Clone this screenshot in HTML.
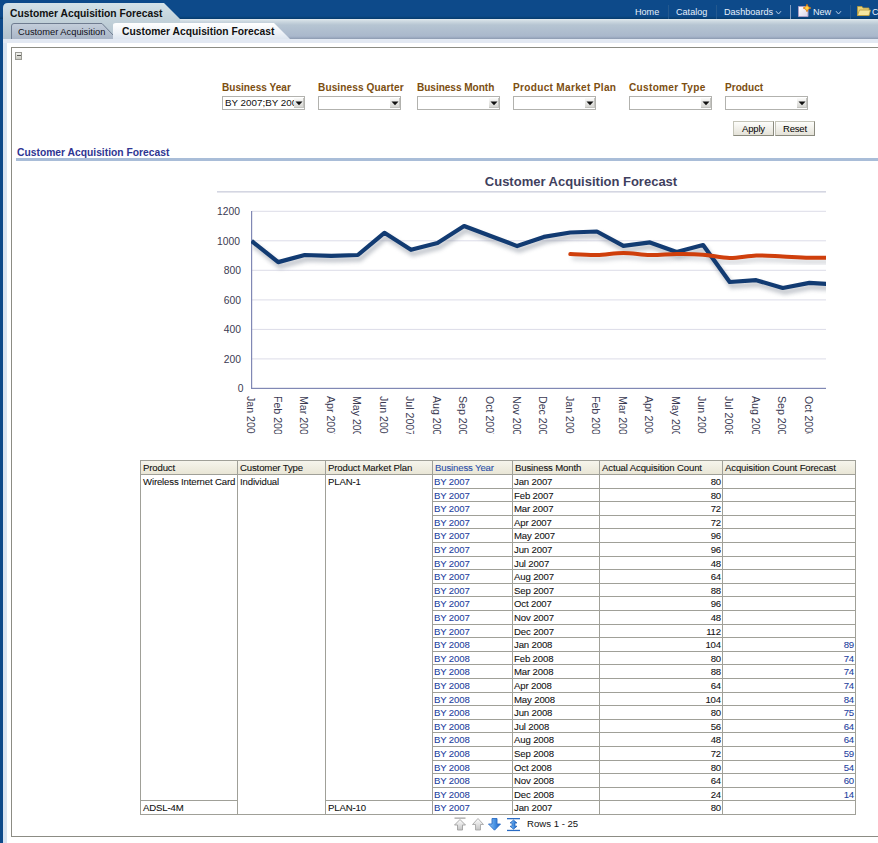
<!DOCTYPE html>
<html><head><meta charset="utf-8">
<style>
html,body{margin:0;padding:0;}
body{width:878px;height:843px;overflow:hidden;position:relative;background:#fff;font-family:"Liberation Sans",sans-serif;}
.a{position:absolute;}
.t{position:absolute;white-space:nowrap;}
</style></head><body>

<!-- left dark frame -->
<div class="a" style="left:0;top:0;width:3px;height:843px;background:#0d4a8a"></div>
<div class="a" style="left:3px;top:39px;width:4px;height:804px;background:#d9e4f1"></div>
<!-- header -->
<div class="a" style="left:0;top:0;width:878px;height:19px;background:linear-gradient(#0d4a8a 0px,#0d4a8a 16px,#0a4680 17px,#053a6c 19px)"></div>
<!-- grey bar -->
<div class="a" style="left:3px;top:19px;width:875px;height:20px;background:linear-gradient(#e2e9ee 0px,#cfdbe2 2px,#b6c5d2 6px,#aab8cc 17px,#a2b0c6 18px,#8c9ab0 20px)"></div>
<!-- light strip -->
<div class="a" style="left:3px;top:39px;width:875px;height:4px;background:#e3e9f3"></div>
<!-- top tab -->
<svg class="a" style="left:0;top:0" width="200" height="45">
 <defs><linearGradient id="tg" x1="0" y1="0" x2="0" y2="1">
  <stop offset="0" stop-color="#d4e2e8"/><stop offset="0.45" stop-color="#c3d2da"/><stop offset="1" stop-color="#b2c2ce"/></linearGradient></defs>
 <path d="M3,39 L3,8 Q3,3 8,3 L164,3 L180,19 L180,39 Z" fill="url(#tg)"/>
</svg>
<div class="t" style="left:10px;top:8px;font-size:10.3px;font-weight:bold;color:#111;line-height:12px">Customer Acquisition Forecast</div>
<!-- inactive subtab -->
<svg class="a" style="left:0;top:0" width="300" height="45">
 <defs><linearGradient id="sg" x1="0" y1="0" x2="0" y2="1">
  <stop offset="0" stop-color="#c4cedb"/><stop offset="1" stop-color="#a9b5c6"/></linearGradient>
  <linearGradient id="ag" x1="0" y1="0" x2="0" y2="1">
  <stop offset="0" stop-color="#ffffff"/><stop offset="0.6" stop-color="#eef2f7"/><stop offset="1" stop-color="#dde5ef"/></linearGradient></defs>
 <path d="M11.5,39 L11.5,26 Q11.5,23.5 14,23.5 L102,23.5 L114,36 L114,39 Z" fill="url(#sg)"/>
 <path d="M11.5,39 L11.5,26 Q11.5,23.5 14,23.5 L102,23.5 L114,36" fill="none" stroke="#6f7c90" stroke-width="1"/>
 <path d="M113,39 L113,25 Q113,23 116,23 L274,23 L290,39 Z" fill="url(#ag)"/>
</svg>
<div class="t" style="left:18px;top:26px;font-size:9.3px;color:#101018;line-height:12px">Customer Acquisition</div>
<div class="t" style="left:122px;top:26px;font-size:10.3px;font-weight:bold;color:#111;line-height:12px">Customer Acquisition Forecast</div>
<!-- nav -->
<div class="t" style="left:635px;top:6px;font-size:9.1px;color:#e6f0fb;line-height:12px">Home</div>
<div class="a" style="left:668px;top:5px;width:1px;height:14px;background:#24598f"></div>
<div class="t" style="left:676px;top:6px;font-size:9.1px;color:#e6f0fb;line-height:12px">Catalog</div>
<div class="a" style="left:716px;top:5px;width:1px;height:14px;background:#24598f"></div>
<div class="t" style="left:724px;top:6px;font-size:9.1px;color:#e6f0fb;line-height:12px">Dashboards</div>
<svg class="a" style="left:775px;top:10px" width="8" height="6"><path d="M1,1.2 L3.5,4 L6,1.2" fill="none" stroke="#b8cfe8" stroke-width="1"/></svg>
<div class="a" style="left:790px;top:5px;width:1px;height:14px;background:#7f9cc0"></div>
<svg class="a" style="left:797px;top:4px" width="16" height="15">
 <defs><linearGradient id="pg" x1="0" y1="0" x2="1" y2="1"><stop offset="0" stop-color="#ffffff"/><stop offset="1" stop-color="#d8d4e8"/></linearGradient></defs>
 <path d="M1.5,2.5 L9,2.5 L11,4.5 L11,12.5 L1.5,12.5 Z" fill="url(#pg)" stroke="#a89cc4" stroke-width="1"/>
 <path d="M10,0.3 Q10.6,3.4 13.8,4 Q10.6,4.6 10,7.7 Q9.4,4.6 6.2,4 Q9.4,3.4 10,0.3 Z" fill="#ffd84a" stroke="#e07a10" stroke-width="0.9"/>
</svg>
<div class="t" style="left:813px;top:6px;font-size:9.1px;color:#e6f0fb;line-height:12px">New</div>
<svg class="a" style="left:835px;top:10px" width="8" height="6"><path d="M1,1.2 L3.5,4 L6,1.2" fill="none" stroke="#b8cfe8" stroke-width="1"/></svg>
<div class="a" style="left:850px;top:5px;width:1px;height:14px;background:#24598f"></div>
<svg class="a" style="left:857px;top:5px" width="14" height="11">
 <path d="M0.5,1.5 L5,1.5 L6,3 L12,3 L12,10.5 L0.5,10.5 Z" fill="#e8d27a" stroke="#b89a3a" stroke-width="0.8"/>
 <path d="M2.5,5 L13.5,5 L12,10.5 L0.5,10.5 Z" fill="#f6e7a0" stroke="#b89a3a" stroke-width="0.8"/>
</svg>
<div class="t" style="left:872px;top:6px;font-size:9.1px;color:#e6f0fb;line-height:12px">Catalog</div>

<!-- content border -->
<div class="a" style="left:11px;top:47px;width:870px;height:788px;border:1px solid #8c8c84"></div>
<!-- collapse icon -->
<div class="a" style="left:15px;top:52px;width:7px;height:8px;border:1px solid #9a9a94;box-sizing:border-box;background:linear-gradient(#f4f4f0,#c8c8c0)"></div>
<div class="a" style="left:17px;top:55px;width:4px;height:1px;background:#5a5a55"></div>
<div class="t" style="left:222px;top:82px;font-size:10.1px;font-weight:bold;color:#7c4e10;line-height:12px;letter-spacing:0px">Business Year</div>
<div class="a" style="left:222px;top:96px;width:81px;height:12px;border:1px solid #b2b2ae;background:#fff"></div>
<div class="t" style="left:225px;top:97px;font-size:9.8px;color:#111;line-height:12px;width:69px;overflow:hidden">BY 2007;BY 2008</div>
<div class="a" style="left:294px;top:98px;width:10px;height:10px;background:linear-gradient(#fbfbfa,#d6d6d2);border-right:1px solid #c4c4c0;border-bottom:1px solid #c4c4c0;box-sizing:border-box"></div>
<svg class="a" style="left:295px;top:101px" width="8" height="5"><path d="M0.5,0.5 L7.5,0.5 L4,4.2 Z" fill="#111"/></svg>
<div class="t" style="left:318px;top:82px;font-size:10.1px;font-weight:bold;color:#7c4e10;line-height:12px;letter-spacing:0.1px">Business Quarter</div>
<div class="a" style="left:318px;top:96px;width:81px;height:12px;border:1px solid #b2b2ae;background:#fff"></div>
<div class="t" style="left:321px;top:97px;font-size:9.8px;color:#111;line-height:12px;width:69px;overflow:hidden"></div>
<div class="a" style="left:390px;top:98px;width:10px;height:10px;background:linear-gradient(#fbfbfa,#d6d6d2);border-right:1px solid #c4c4c0;border-bottom:1px solid #c4c4c0;box-sizing:border-box"></div>
<svg class="a" style="left:391px;top:101px" width="8" height="5"><path d="M0.5,0.5 L7.5,0.5 L4,4.2 Z" fill="#111"/></svg>
<div class="t" style="left:417px;top:82px;font-size:10.1px;font-weight:bold;color:#7c4e10;line-height:12px;letter-spacing:-0.05px">Business Month</div>
<div class="a" style="left:417px;top:96px;width:81px;height:12px;border:1px solid #b2b2ae;background:#fff"></div>
<div class="t" style="left:420px;top:97px;font-size:9.8px;color:#111;line-height:12px;width:69px;overflow:hidden"></div>
<div class="a" style="left:489px;top:98px;width:10px;height:10px;background:linear-gradient(#fbfbfa,#d6d6d2);border-right:1px solid #c4c4c0;border-bottom:1px solid #c4c4c0;box-sizing:border-box"></div>
<svg class="a" style="left:490px;top:101px" width="8" height="5"><path d="M0.5,0.5 L7.5,0.5 L4,4.2 Z" fill="#111"/></svg>
<div class="t" style="left:513px;top:82px;font-size:10.1px;font-weight:bold;color:#7c4e10;line-height:12px;letter-spacing:0.3px">Product Market Plan</div>
<div class="a" style="left:513px;top:96px;width:81px;height:12px;border:1px solid #b2b2ae;background:#fff"></div>
<div class="t" style="left:516px;top:97px;font-size:9.8px;color:#111;line-height:12px;width:69px;overflow:hidden"></div>
<div class="a" style="left:585px;top:98px;width:10px;height:10px;background:linear-gradient(#fbfbfa,#d6d6d2);border-right:1px solid #c4c4c0;border-bottom:1px solid #c4c4c0;box-sizing:border-box"></div>
<svg class="a" style="left:586px;top:101px" width="8" height="5"><path d="M0.5,0.5 L7.5,0.5 L4,4.2 Z" fill="#111"/></svg>
<div class="t" style="left:629px;top:82px;font-size:10.1px;font-weight:bold;color:#7c4e10;line-height:12px;letter-spacing:0.3px">Customer Type</div>
<div class="a" style="left:629px;top:96px;width:81px;height:12px;border:1px solid #b2b2ae;background:#fff"></div>
<div class="t" style="left:632px;top:97px;font-size:9.8px;color:#111;line-height:12px;width:69px;overflow:hidden"></div>
<div class="a" style="left:701px;top:98px;width:10px;height:10px;background:linear-gradient(#fbfbfa,#d6d6d2);border-right:1px solid #c4c4c0;border-bottom:1px solid #c4c4c0;box-sizing:border-box"></div>
<svg class="a" style="left:702px;top:101px" width="8" height="5"><path d="M0.5,0.5 L7.5,0.5 L4,4.2 Z" fill="#111"/></svg>
<div class="t" style="left:725px;top:82px;font-size:10.1px;font-weight:bold;color:#7c4e10;line-height:12px;letter-spacing:0px">Product</div>
<div class="a" style="left:725px;top:96px;width:81px;height:12px;border:1px solid #b2b2ae;background:#fff"></div>
<div class="t" style="left:728px;top:97px;font-size:9.8px;color:#111;line-height:12px;width:69px;overflow:hidden"></div>
<div class="a" style="left:797px;top:98px;width:10px;height:10px;background:linear-gradient(#fbfbfa,#d6d6d2);border-right:1px solid #c4c4c0;border-bottom:1px solid #c4c4c0;box-sizing:border-box"></div>
<svg class="a" style="left:798px;top:101px" width="8" height="5"><path d="M0.5,0.5 L7.5,0.5 L4,4.2 Z" fill="#111"/></svg>

<div class="a" style="left:733px;top:121px;width:39px;height:13px;border:1px solid #c4c4b8;border-right-color:#8a8a7e;border-bottom-color:#8a8a7e;background:linear-gradient(#fdfdfb,#e4e2d8)"></div>
<div class="t" style="left:733px;top:122px;width:41px;text-align:center;font-size:9.5px;color:#000;letter-spacing:-0.2px;line-height:13px">Apply</div>
<div class="a" style="left:775px;top:121px;width:38px;height:13px;border:1px solid #c4c4b8;border-right-color:#8a8a7e;border-bottom-color:#8a8a7e;background:linear-gradient(#fdfdfb,#e4e2d8)"></div>
<div class="t" style="left:775px;top:122px;width:40px;text-align:center;font-size:9.5px;color:#000;letter-spacing:-0.2px;line-height:13px">Reset</div>
<!-- section title -->
<div class="t" style="left:17px;top:147px;font-size:10.3px;font-weight:bold;color:#2f3592;line-height:12px">Customer Acquisition Forecast</div>
<div class="a" style="left:16px;top:158px;width:862px;height:3px;background:#a9bdd8"></div>
<svg class="a" style="left:0;top:0" width="878" height="843">
<defs><filter id="sh" x="-5%" y="-50%" width="110%" height="200%"><feGaussianBlur stdDeviation="2"/></filter><clipPath id="pc"><rect x="251" y="190" width="575" height="200"/></clipPath></defs>
<rect x="217" y="191" width="609" height="1.6" fill="#d4d6e2"/>
<rect x="252" y="358.4" width="574" height="1" fill="#dcdce8"/>
<rect x="252" y="328.9" width="574" height="1" fill="#dcdce8"/>
<rect x="252" y="299.4" width="574" height="1" fill="#dcdce8"/>
<rect x="252" y="269.8" width="574" height="1" fill="#dcdce8"/>
<rect x="252" y="240.3" width="574" height="1" fill="#dcdce8"/>
<rect x="252" y="210.8" width="574" height="1" fill="#dcdce8"/>
<rect x="251" y="211" width="1.2" height="178.0" fill="#8088b4"/>
<rect x="251" y="387.8" width="575" height="1.2" fill="#8088b4"/>
<g clip-path="url(#pc)">
<path d="M570.3,254.1 C574.7,254.3 588.0,255.3 596.9,255.1 C605.7,254.9 614.6,253.0 623.4,253 C632.3,253.0 641.1,254.9 650.0,255.1 C658.9,255.3 667.7,254.2 676.6,254.1 C685.4,254.0 694.3,254.0 703.1,254.7 C712.0,255.3 720.8,257.9 729.7,258 C738.5,258.1 747.4,255.8 756.2,255.5 C765.1,255.2 773.9,256.1 782.8,256.5 C791.7,256.9 800.5,257.5 809.4,257.7 C818.2,257.9 831.5,257.7 835.9,257.7" transform="translate(2,4)" fill="none" stroke="#9aa0aa" stroke-width="4" opacity="0.45" filter="url(#sh)"/>
<path d="M251.6,241 L278.2,262.1 L304.7,255 L331.3,255.8 L357.8,255 L384.4,232.8 L411.0,249.8 L437.5,243 L464.1,226 L490.6,236 L517.2,246.1 L543.8,236.9 L570.3,232.5 L596.9,231.5 L623.4,245.9 L650.0,242.4 L676.6,252 L703.1,245 L729.7,282 L756.2,280.2 L782.8,288 L809.4,282.9 L835.9,284.4" transform="translate(2,4)" fill="none" stroke="#8a929e" stroke-width="5" opacity="0.55" filter="url(#sh)"/>
<path d="M251.6,241 L278.2,262.1 L304.7,255 L331.3,255.8 L357.8,255 L384.4,232.8 L411.0,249.8 L437.5,243 L464.1,226 L490.6,236 L517.2,246.1 L543.8,236.9 L570.3,232.5 L596.9,231.5 L623.4,245.9 L650.0,242.4 L676.6,252 L703.1,245 L729.7,282 L756.2,280.2 L782.8,288 L809.4,282.9 L835.9,284.4" fill="none" stroke="#123b72" stroke-width="4.2" stroke-linejoin="round"/>
<path d="M570.3,254.1 C574.7,254.3 588.0,255.3 596.9,255.1 C605.7,254.9 614.6,253.0 623.4,253 C632.3,253.0 641.1,254.9 650.0,255.1 C658.9,255.3 667.7,254.2 676.6,254.1 C685.4,254.0 694.3,254.0 703.1,254.7 C712.0,255.3 720.8,257.9 729.7,258 C738.5,258.1 747.4,255.8 756.2,255.5 C765.1,255.2 773.9,256.1 782.8,256.5 C791.7,256.9 800.5,257.5 809.4,257.7 C818.2,257.9 831.5,257.7 835.9,257.7" fill="none" stroke="#cf3f0c" stroke-width="4" stroke-linecap="round"/>
</g>
<text x="243.5" y="392.1" text-anchor="end" font-family="Liberation Sans" font-size="10.3" fill="#3a3a52">0</text>
<text x="241" y="362.6" text-anchor="end" font-family="Liberation Sans" font-size="10.3" fill="#3a3a52">200</text>
<text x="241" y="333.1" text-anchor="end" font-family="Liberation Sans" font-size="10.3" fill="#3a3a52">400</text>
<text x="241" y="303.6" text-anchor="end" font-family="Liberation Sans" font-size="10.3" fill="#3a3a52">600</text>
<text x="241" y="274.0" text-anchor="end" font-family="Liberation Sans" font-size="10.3" fill="#3a3a52">800</text>
<text x="240" y="244.5" text-anchor="end" font-family="Liberation Sans" font-size="10.3" fill="#3a3a52">1000</text>
<text x="240" y="215.0" text-anchor="end" font-family="Liberation Sans" font-size="10.3" fill="#3a3a52">1200</text>
<text x="581" y="186" text-anchor="middle" font-family="Liberation Sans" font-size="13" font-weight="bold" fill="#3f3f5e">Customer Acquisition Forecast</text>
</svg>
<div class="a" style="left:230px;top:394px;width:600px;height:40px;overflow:hidden">
<div class="t" style="left:26.9px;top:2px;transform-origin:0 0;transform:rotate(90deg);font-size:10.6px;color:#3a3a52;line-height:12px">Jan 2007</div>
<div class="t" style="left:53.5px;top:2px;transform-origin:0 0;transform:rotate(90deg);font-size:10.6px;color:#3a3a52;line-height:12px">Feb 2007</div>
<div class="t" style="left:80.0px;top:2px;transform-origin:0 0;transform:rotate(90deg);font-size:10.6px;color:#3a3a52;line-height:12px">Mar 2007</div>
<div class="t" style="left:106.6px;top:2px;transform-origin:0 0;transform:rotate(90deg);font-size:10.6px;color:#3a3a52;line-height:12px">Apr 2007</div>
<div class="t" style="left:133.1px;top:2px;transform-origin:0 0;transform:rotate(90deg);font-size:10.6px;color:#3a3a52;line-height:12px">May 2007</div>
<div class="t" style="left:159.7px;top:2px;transform-origin:0 0;transform:rotate(90deg);font-size:10.6px;color:#3a3a52;line-height:12px">Jun 2007</div>
<div class="t" style="left:186.3px;top:2px;transform-origin:0 0;transform:rotate(90deg);font-size:10.6px;color:#3a3a52;line-height:12px">Jul 2007</div>
<div class="t" style="left:212.8px;top:2px;transform-origin:0 0;transform:rotate(90deg);font-size:10.6px;color:#3a3a52;line-height:12px">Aug 2007</div>
<div class="t" style="left:239.4px;top:2px;transform-origin:0 0;transform:rotate(90deg);font-size:10.6px;color:#3a3a52;line-height:12px">Sep 2007</div>
<div class="t" style="left:265.9px;top:2px;transform-origin:0 0;transform:rotate(90deg);font-size:10.6px;color:#3a3a52;line-height:12px">Oct 2007</div>
<div class="t" style="left:292.5px;top:2px;transform-origin:0 0;transform:rotate(90deg);font-size:10.6px;color:#3a3a52;line-height:12px">Nov 2007</div>
<div class="t" style="left:319.1px;top:2px;transform-origin:0 0;transform:rotate(90deg);font-size:10.6px;color:#3a3a52;line-height:12px">Dec 2007</div>
<div class="t" style="left:345.6px;top:2px;transform-origin:0 0;transform:rotate(90deg);font-size:10.6px;color:#3a3a52;line-height:12px">Jan 2008</div>
<div class="t" style="left:372.2px;top:2px;transform-origin:0 0;transform:rotate(90deg);font-size:10.6px;color:#3a3a52;line-height:12px">Feb 2008</div>
<div class="t" style="left:398.7px;top:2px;transform-origin:0 0;transform:rotate(90deg);font-size:10.6px;color:#3a3a52;line-height:12px">Mar 2008</div>
<div class="t" style="left:425.3px;top:2px;transform-origin:0 0;transform:rotate(90deg);font-size:10.6px;color:#3a3a52;line-height:12px">Apr 2008</div>
<div class="t" style="left:451.9px;top:2px;transform-origin:0 0;transform:rotate(90deg);font-size:10.6px;color:#3a3a52;line-height:12px">May 2008</div>
<div class="t" style="left:478.4px;top:2px;transform-origin:0 0;transform:rotate(90deg);font-size:10.6px;color:#3a3a52;line-height:12px">Jun 2008</div>
<div class="t" style="left:505.0px;top:2px;transform-origin:0 0;transform:rotate(90deg);font-size:10.6px;color:#3a3a52;line-height:12px">Jul 2008</div>
<div class="t" style="left:531.5px;top:2px;transform-origin:0 0;transform:rotate(90deg);font-size:10.6px;color:#3a3a52;line-height:12px">Aug 2008</div>
<div class="t" style="left:558.1px;top:2px;transform-origin:0 0;transform:rotate(90deg);font-size:10.6px;color:#3a3a52;line-height:12px">Sep 2008</div>
<div class="t" style="left:584.7px;top:2px;transform-origin:0 0;transform:rotate(90deg);font-size:10.6px;color:#3a3a52;line-height:12px">Oct 2008</div>
</div>
<!-- table -->
<div class="a" style="left:140px;top:460px;width:715px;height:14px;background:linear-gradient(#f7f6ee,#e9e6d6)"></div>
<div class="a" style="left:140px;top:460px;width:716px;height:1px;background:#a0a098"></div>
<div class="a" style="left:140px;top:474px;width:716px;height:1px;background:#a0a098"></div>
<div class="a" style="left:140px;top:814px;width:716px;height:1px;background:#a0a098"></div>
<div class="a" style="left:140px;top:460px;width:1px;height:355px;background:#a0a098"></div>
<div class="a" style="left:237px;top:460px;width:1px;height:355px;background:#a0a098"></div>
<div class="a" style="left:325px;top:460px;width:1px;height:355px;background:#a0a098"></div>
<div class="a" style="left:432px;top:460px;width:1px;height:355px;background:#a0a098"></div>
<div class="a" style="left:512px;top:460px;width:1px;height:355px;background:#a0a098"></div>
<div class="a" style="left:599px;top:460px;width:1px;height:355px;background:#a0a098"></div>
<div class="a" style="left:722px;top:460px;width:1px;height:355px;background:#a0a098"></div>
<div class="a" style="left:855px;top:460px;width:1px;height:355px;background:#a0a098"></div>
<div class="a" style="left:432px;top:488px;width:423px;height:1px;background:#a0a098"></div>
<div class="a" style="left:432px;top:501px;width:423px;height:1px;background:#a0a098"></div>
<div class="a" style="left:432px;top:515px;width:423px;height:1px;background:#a0a098"></div>
<div class="a" style="left:432px;top:528px;width:423px;height:1px;background:#a0a098"></div>
<div class="a" style="left:432px;top:542px;width:423px;height:1px;background:#a0a098"></div>
<div class="a" style="left:432px;top:556px;width:423px;height:1px;background:#a0a098"></div>
<div class="a" style="left:432px;top:569px;width:423px;height:1px;background:#a0a098"></div>
<div class="a" style="left:432px;top:583px;width:423px;height:1px;background:#a0a098"></div>
<div class="a" style="left:432px;top:596px;width:423px;height:1px;background:#a0a098"></div>
<div class="a" style="left:432px;top:610px;width:423px;height:1px;background:#a0a098"></div>
<div class="a" style="left:432px;top:624px;width:423px;height:1px;background:#a0a098"></div>
<div class="a" style="left:432px;top:637px;width:423px;height:1px;background:#a0a098"></div>
<div class="a" style="left:432px;top:651px;width:423px;height:1px;background:#a0a098"></div>
<div class="a" style="left:432px;top:664px;width:423px;height:1px;background:#a0a098"></div>
<div class="a" style="left:432px;top:678px;width:423px;height:1px;background:#a0a098"></div>
<div class="a" style="left:432px;top:692px;width:423px;height:1px;background:#a0a098"></div>
<div class="a" style="left:432px;top:705px;width:423px;height:1px;background:#a0a098"></div>
<div class="a" style="left:432px;top:719px;width:423px;height:1px;background:#a0a098"></div>
<div class="a" style="left:432px;top:732px;width:423px;height:1px;background:#a0a098"></div>
<div class="a" style="left:432px;top:746px;width:423px;height:1px;background:#a0a098"></div>
<div class="a" style="left:432px;top:760px;width:423px;height:1px;background:#a0a098"></div>
<div class="a" style="left:432px;top:773px;width:423px;height:1px;background:#a0a098"></div>
<div class="a" style="left:432px;top:787px;width:423px;height:1px;background:#a0a098"></div>
<div class="a" style="left:140px;top:800px;width:97px;height:1px;background:#a0a098"></div>
<div class="a" style="left:325px;top:800px;width:530px;height:1px;background:#a0a098"></div>
<div class="t" style="left:143px;top:462px;font-size:9.6px;letter-spacing:-0.15px;line-height:12px;-webkit-text-stroke:0.08px currentColor;color:#111">Product</div>
<div class="t" style="left:240px;top:462px;font-size:9.6px;letter-spacing:-0.15px;line-height:12px;-webkit-text-stroke:0.08px currentColor;color:#111">Customer Type</div>
<div class="t" style="left:328px;top:462px;font-size:9.6px;letter-spacing:-0.15px;line-height:12px;-webkit-text-stroke:0.08px currentColor;color:#111">Product Market Plan</div>
<div class="t" style="left:435px;top:462px;font-size:9.6px;letter-spacing:-0.15px;line-height:12px;-webkit-text-stroke:0.08px currentColor;color:#2a4ea8">Business Year</div>
<div class="t" style="left:515px;top:462px;font-size:9.6px;letter-spacing:-0.15px;line-height:12px;-webkit-text-stroke:0.08px currentColor;color:#111">Business Month</div>
<div class="t" style="left:602px;top:462px;font-size:9.6px;letter-spacing:-0.15px;line-height:12px;-webkit-text-stroke:0.08px currentColor;color:#111">Actual Acquisition Count</div>
<div class="t" style="left:725px;top:462px;font-size:9.6px;letter-spacing:-0.15px;line-height:12px;-webkit-text-stroke:0.08px currentColor;color:#111">Acquisition Count Forecast</div>
<div class="t" style="left:434px;top:476px;font-size:9.6px;letter-spacing:-0.15px;line-height:12px;-webkit-text-stroke:0.08px currentColor;color:#1c3e9e">BY 2007</div>
<div class="t" style="left:514px;top:476px;font-size:9.6px;letter-spacing:-0.15px;line-height:12px;-webkit-text-stroke:0.08px currentColor;color:#111">Jan 2007</div>
<div class="t" style="left:681px;top:476px;width:40px;text-align:right;font-size:9.6px;letter-spacing:-0.15px;line-height:12px;-webkit-text-stroke:0.08px currentColor;color:#111">80</div>
<div class="t" style="left:434px;top:490px;font-size:9.6px;letter-spacing:-0.15px;line-height:12px;-webkit-text-stroke:0.08px currentColor;color:#1c3e9e">BY 2007</div>
<div class="t" style="left:514px;top:490px;font-size:9.6px;letter-spacing:-0.15px;line-height:12px;-webkit-text-stroke:0.08px currentColor;color:#111">Feb 2007</div>
<div class="t" style="left:681px;top:490px;width:40px;text-align:right;font-size:9.6px;letter-spacing:-0.15px;line-height:12px;-webkit-text-stroke:0.08px currentColor;color:#111">80</div>
<div class="t" style="left:434px;top:503px;font-size:9.6px;letter-spacing:-0.15px;line-height:12px;-webkit-text-stroke:0.08px currentColor;color:#1c3e9e">BY 2007</div>
<div class="t" style="left:514px;top:503px;font-size:9.6px;letter-spacing:-0.15px;line-height:12px;-webkit-text-stroke:0.08px currentColor;color:#111">Mar 2007</div>
<div class="t" style="left:681px;top:503px;width:40px;text-align:right;font-size:9.6px;letter-spacing:-0.15px;line-height:12px;-webkit-text-stroke:0.08px currentColor;color:#111">72</div>
<div class="t" style="left:434px;top:517px;font-size:9.6px;letter-spacing:-0.15px;line-height:12px;-webkit-text-stroke:0.08px currentColor;color:#1c3e9e">BY 2007</div>
<div class="t" style="left:514px;top:517px;font-size:9.6px;letter-spacing:-0.15px;line-height:12px;-webkit-text-stroke:0.08px currentColor;color:#111">Apr 2007</div>
<div class="t" style="left:681px;top:517px;width:40px;text-align:right;font-size:9.6px;letter-spacing:-0.15px;line-height:12px;-webkit-text-stroke:0.08px currentColor;color:#111">72</div>
<div class="t" style="left:434px;top:530px;font-size:9.6px;letter-spacing:-0.15px;line-height:12px;-webkit-text-stroke:0.08px currentColor;color:#1c3e9e">BY 2007</div>
<div class="t" style="left:514px;top:530px;font-size:9.6px;letter-spacing:-0.15px;line-height:12px;-webkit-text-stroke:0.08px currentColor;color:#111">May 2007</div>
<div class="t" style="left:681px;top:530px;width:40px;text-align:right;font-size:9.6px;letter-spacing:-0.15px;line-height:12px;-webkit-text-stroke:0.08px currentColor;color:#111">96</div>
<div class="t" style="left:434px;top:544px;font-size:9.6px;letter-spacing:-0.15px;line-height:12px;-webkit-text-stroke:0.08px currentColor;color:#1c3e9e">BY 2007</div>
<div class="t" style="left:514px;top:544px;font-size:9.6px;letter-spacing:-0.15px;line-height:12px;-webkit-text-stroke:0.08px currentColor;color:#111">Jun 2007</div>
<div class="t" style="left:681px;top:544px;width:40px;text-align:right;font-size:9.6px;letter-spacing:-0.15px;line-height:12px;-webkit-text-stroke:0.08px currentColor;color:#111">96</div>
<div class="t" style="left:434px;top:558px;font-size:9.6px;letter-spacing:-0.15px;line-height:12px;-webkit-text-stroke:0.08px currentColor;color:#1c3e9e">BY 2007</div>
<div class="t" style="left:514px;top:558px;font-size:9.6px;letter-spacing:-0.15px;line-height:12px;-webkit-text-stroke:0.08px currentColor;color:#111">Jul 2007</div>
<div class="t" style="left:681px;top:558px;width:40px;text-align:right;font-size:9.6px;letter-spacing:-0.15px;line-height:12px;-webkit-text-stroke:0.08px currentColor;color:#111">48</div>
<div class="t" style="left:434px;top:571px;font-size:9.6px;letter-spacing:-0.15px;line-height:12px;-webkit-text-stroke:0.08px currentColor;color:#1c3e9e">BY 2007</div>
<div class="t" style="left:514px;top:571px;font-size:9.6px;letter-spacing:-0.15px;line-height:12px;-webkit-text-stroke:0.08px currentColor;color:#111">Aug 2007</div>
<div class="t" style="left:681px;top:571px;width:40px;text-align:right;font-size:9.6px;letter-spacing:-0.15px;line-height:12px;-webkit-text-stroke:0.08px currentColor;color:#111">64</div>
<div class="t" style="left:434px;top:585px;font-size:9.6px;letter-spacing:-0.15px;line-height:12px;-webkit-text-stroke:0.08px currentColor;color:#1c3e9e">BY 2007</div>
<div class="t" style="left:514px;top:585px;font-size:9.6px;letter-spacing:-0.15px;line-height:12px;-webkit-text-stroke:0.08px currentColor;color:#111">Sep 2007</div>
<div class="t" style="left:681px;top:585px;width:40px;text-align:right;font-size:9.6px;letter-spacing:-0.15px;line-height:12px;-webkit-text-stroke:0.08px currentColor;color:#111">88</div>
<div class="t" style="left:434px;top:598px;font-size:9.6px;letter-spacing:-0.15px;line-height:12px;-webkit-text-stroke:0.08px currentColor;color:#1c3e9e">BY 2007</div>
<div class="t" style="left:514px;top:598px;font-size:9.6px;letter-spacing:-0.15px;line-height:12px;-webkit-text-stroke:0.08px currentColor;color:#111">Oct 2007</div>
<div class="t" style="left:681px;top:598px;width:40px;text-align:right;font-size:9.6px;letter-spacing:-0.15px;line-height:12px;-webkit-text-stroke:0.08px currentColor;color:#111">96</div>
<div class="t" style="left:434px;top:612px;font-size:9.6px;letter-spacing:-0.15px;line-height:12px;-webkit-text-stroke:0.08px currentColor;color:#1c3e9e">BY 2007</div>
<div class="t" style="left:514px;top:612px;font-size:9.6px;letter-spacing:-0.15px;line-height:12px;-webkit-text-stroke:0.08px currentColor;color:#111">Nov 2007</div>
<div class="t" style="left:681px;top:612px;width:40px;text-align:right;font-size:9.6px;letter-spacing:-0.15px;line-height:12px;-webkit-text-stroke:0.08px currentColor;color:#111">48</div>
<div class="t" style="left:434px;top:626px;font-size:9.6px;letter-spacing:-0.15px;line-height:12px;-webkit-text-stroke:0.08px currentColor;color:#1c3e9e">BY 2007</div>
<div class="t" style="left:514px;top:626px;font-size:9.6px;letter-spacing:-0.15px;line-height:12px;-webkit-text-stroke:0.08px currentColor;color:#111">Dec 2007</div>
<div class="t" style="left:681px;top:626px;width:40px;text-align:right;font-size:9.6px;letter-spacing:-0.15px;line-height:12px;-webkit-text-stroke:0.08px currentColor;color:#111">112</div>
<div class="t" style="left:434px;top:639px;font-size:9.6px;letter-spacing:-0.15px;line-height:12px;-webkit-text-stroke:0.08px currentColor;color:#1c3e9e">BY 2008</div>
<div class="t" style="left:514px;top:639px;font-size:9.6px;letter-spacing:-0.15px;line-height:12px;-webkit-text-stroke:0.08px currentColor;color:#111">Jan 2008</div>
<div class="t" style="left:681px;top:639px;width:40px;text-align:right;font-size:9.6px;letter-spacing:-0.15px;line-height:12px;-webkit-text-stroke:0.08px currentColor;color:#111">104</div>
<div class="t" style="left:814px;top:639px;width:40px;text-align:right;font-size:9.6px;letter-spacing:-0.15px;line-height:12px;-webkit-text-stroke:0.08px currentColor;color:#1c3e9e">89</div>
<div class="t" style="left:434px;top:653px;font-size:9.6px;letter-spacing:-0.15px;line-height:12px;-webkit-text-stroke:0.08px currentColor;color:#1c3e9e">BY 2008</div>
<div class="t" style="left:514px;top:653px;font-size:9.6px;letter-spacing:-0.15px;line-height:12px;-webkit-text-stroke:0.08px currentColor;color:#111">Feb 2008</div>
<div class="t" style="left:681px;top:653px;width:40px;text-align:right;font-size:9.6px;letter-spacing:-0.15px;line-height:12px;-webkit-text-stroke:0.08px currentColor;color:#111">80</div>
<div class="t" style="left:814px;top:653px;width:40px;text-align:right;font-size:9.6px;letter-spacing:-0.15px;line-height:12px;-webkit-text-stroke:0.08px currentColor;color:#1c3e9e">74</div>
<div class="t" style="left:434px;top:666px;font-size:9.6px;letter-spacing:-0.15px;line-height:12px;-webkit-text-stroke:0.08px currentColor;color:#1c3e9e">BY 2008</div>
<div class="t" style="left:514px;top:666px;font-size:9.6px;letter-spacing:-0.15px;line-height:12px;-webkit-text-stroke:0.08px currentColor;color:#111">Mar 2008</div>
<div class="t" style="left:681px;top:666px;width:40px;text-align:right;font-size:9.6px;letter-spacing:-0.15px;line-height:12px;-webkit-text-stroke:0.08px currentColor;color:#111">88</div>
<div class="t" style="left:814px;top:666px;width:40px;text-align:right;font-size:9.6px;letter-spacing:-0.15px;line-height:12px;-webkit-text-stroke:0.08px currentColor;color:#1c3e9e">74</div>
<div class="t" style="left:434px;top:680px;font-size:9.6px;letter-spacing:-0.15px;line-height:12px;-webkit-text-stroke:0.08px currentColor;color:#1c3e9e">BY 2008</div>
<div class="t" style="left:514px;top:680px;font-size:9.6px;letter-spacing:-0.15px;line-height:12px;-webkit-text-stroke:0.08px currentColor;color:#111">Apr 2008</div>
<div class="t" style="left:681px;top:680px;width:40px;text-align:right;font-size:9.6px;letter-spacing:-0.15px;line-height:12px;-webkit-text-stroke:0.08px currentColor;color:#111">64</div>
<div class="t" style="left:814px;top:680px;width:40px;text-align:right;font-size:9.6px;letter-spacing:-0.15px;line-height:12px;-webkit-text-stroke:0.08px currentColor;color:#1c3e9e">74</div>
<div class="t" style="left:434px;top:694px;font-size:9.6px;letter-spacing:-0.15px;line-height:12px;-webkit-text-stroke:0.08px currentColor;color:#1c3e9e">BY 2008</div>
<div class="t" style="left:514px;top:694px;font-size:9.6px;letter-spacing:-0.15px;line-height:12px;-webkit-text-stroke:0.08px currentColor;color:#111">May 2008</div>
<div class="t" style="left:681px;top:694px;width:40px;text-align:right;font-size:9.6px;letter-spacing:-0.15px;line-height:12px;-webkit-text-stroke:0.08px currentColor;color:#111">104</div>
<div class="t" style="left:814px;top:694px;width:40px;text-align:right;font-size:9.6px;letter-spacing:-0.15px;line-height:12px;-webkit-text-stroke:0.08px currentColor;color:#1c3e9e">84</div>
<div class="t" style="left:434px;top:707px;font-size:9.6px;letter-spacing:-0.15px;line-height:12px;-webkit-text-stroke:0.08px currentColor;color:#1c3e9e">BY 2008</div>
<div class="t" style="left:514px;top:707px;font-size:9.6px;letter-spacing:-0.15px;line-height:12px;-webkit-text-stroke:0.08px currentColor;color:#111">Jun 2008</div>
<div class="t" style="left:681px;top:707px;width:40px;text-align:right;font-size:9.6px;letter-spacing:-0.15px;line-height:12px;-webkit-text-stroke:0.08px currentColor;color:#111">80</div>
<div class="t" style="left:814px;top:707px;width:40px;text-align:right;font-size:9.6px;letter-spacing:-0.15px;line-height:12px;-webkit-text-stroke:0.08px currentColor;color:#1c3e9e">75</div>
<div class="t" style="left:434px;top:721px;font-size:9.6px;letter-spacing:-0.15px;line-height:12px;-webkit-text-stroke:0.08px currentColor;color:#1c3e9e">BY 2008</div>
<div class="t" style="left:514px;top:721px;font-size:9.6px;letter-spacing:-0.15px;line-height:12px;-webkit-text-stroke:0.08px currentColor;color:#111">Jul 2008</div>
<div class="t" style="left:681px;top:721px;width:40px;text-align:right;font-size:9.6px;letter-spacing:-0.15px;line-height:12px;-webkit-text-stroke:0.08px currentColor;color:#111">56</div>
<div class="t" style="left:814px;top:721px;width:40px;text-align:right;font-size:9.6px;letter-spacing:-0.15px;line-height:12px;-webkit-text-stroke:0.08px currentColor;color:#1c3e9e">64</div>
<div class="t" style="left:434px;top:734px;font-size:9.6px;letter-spacing:-0.15px;line-height:12px;-webkit-text-stroke:0.08px currentColor;color:#1c3e9e">BY 2008</div>
<div class="t" style="left:514px;top:734px;font-size:9.6px;letter-spacing:-0.15px;line-height:12px;-webkit-text-stroke:0.08px currentColor;color:#111">Aug 2008</div>
<div class="t" style="left:681px;top:734px;width:40px;text-align:right;font-size:9.6px;letter-spacing:-0.15px;line-height:12px;-webkit-text-stroke:0.08px currentColor;color:#111">48</div>
<div class="t" style="left:814px;top:734px;width:40px;text-align:right;font-size:9.6px;letter-spacing:-0.15px;line-height:12px;-webkit-text-stroke:0.08px currentColor;color:#1c3e9e">64</div>
<div class="t" style="left:434px;top:748px;font-size:9.6px;letter-spacing:-0.15px;line-height:12px;-webkit-text-stroke:0.08px currentColor;color:#1c3e9e">BY 2008</div>
<div class="t" style="left:514px;top:748px;font-size:9.6px;letter-spacing:-0.15px;line-height:12px;-webkit-text-stroke:0.08px currentColor;color:#111">Sep 2008</div>
<div class="t" style="left:681px;top:748px;width:40px;text-align:right;font-size:9.6px;letter-spacing:-0.15px;line-height:12px;-webkit-text-stroke:0.08px currentColor;color:#111">72</div>
<div class="t" style="left:814px;top:748px;width:40px;text-align:right;font-size:9.6px;letter-spacing:-0.15px;line-height:12px;-webkit-text-stroke:0.08px currentColor;color:#1c3e9e">59</div>
<div class="t" style="left:434px;top:762px;font-size:9.6px;letter-spacing:-0.15px;line-height:12px;-webkit-text-stroke:0.08px currentColor;color:#1c3e9e">BY 2008</div>
<div class="t" style="left:514px;top:762px;font-size:9.6px;letter-spacing:-0.15px;line-height:12px;-webkit-text-stroke:0.08px currentColor;color:#111">Oct 2008</div>
<div class="t" style="left:681px;top:762px;width:40px;text-align:right;font-size:9.6px;letter-spacing:-0.15px;line-height:12px;-webkit-text-stroke:0.08px currentColor;color:#111">80</div>
<div class="t" style="left:814px;top:762px;width:40px;text-align:right;font-size:9.6px;letter-spacing:-0.15px;line-height:12px;-webkit-text-stroke:0.08px currentColor;color:#1c3e9e">54</div>
<div class="t" style="left:434px;top:775px;font-size:9.6px;letter-spacing:-0.15px;line-height:12px;-webkit-text-stroke:0.08px currentColor;color:#1c3e9e">BY 2008</div>
<div class="t" style="left:514px;top:775px;font-size:9.6px;letter-spacing:-0.15px;line-height:12px;-webkit-text-stroke:0.08px currentColor;color:#111">Nov 2008</div>
<div class="t" style="left:681px;top:775px;width:40px;text-align:right;font-size:9.6px;letter-spacing:-0.15px;line-height:12px;-webkit-text-stroke:0.08px currentColor;color:#111">64</div>
<div class="t" style="left:814px;top:775px;width:40px;text-align:right;font-size:9.6px;letter-spacing:-0.15px;line-height:12px;-webkit-text-stroke:0.08px currentColor;color:#1c3e9e">60</div>
<div class="t" style="left:434px;top:789px;font-size:9.6px;letter-spacing:-0.15px;line-height:12px;-webkit-text-stroke:0.08px currentColor;color:#1c3e9e">BY 2008</div>
<div class="t" style="left:514px;top:789px;font-size:9.6px;letter-spacing:-0.15px;line-height:12px;-webkit-text-stroke:0.08px currentColor;color:#111">Dec 2008</div>
<div class="t" style="left:681px;top:789px;width:40px;text-align:right;font-size:9.6px;letter-spacing:-0.15px;line-height:12px;-webkit-text-stroke:0.08px currentColor;color:#111">24</div>
<div class="t" style="left:814px;top:789px;width:40px;text-align:right;font-size:9.6px;letter-spacing:-0.15px;line-height:12px;-webkit-text-stroke:0.08px currentColor;color:#1c3e9e">14</div>
<div class="t" style="left:434px;top:802px;font-size:9.6px;letter-spacing:-0.15px;line-height:12px;-webkit-text-stroke:0.08px currentColor;color:#1c3e9e">BY 2007</div>
<div class="t" style="left:514px;top:802px;font-size:9.6px;letter-spacing:-0.15px;line-height:12px;-webkit-text-stroke:0.08px currentColor;color:#111">Jan 2007</div>
<div class="t" style="left:681px;top:802px;width:40px;text-align:right;font-size:9.6px;letter-spacing:-0.15px;line-height:12px;-webkit-text-stroke:0.08px currentColor;color:#111">80</div>
<div class="t" style="left:143px;top:476px;font-size:9.6px;letter-spacing:-0.15px;line-height:12px;-webkit-text-stroke:0.08px currentColor;color:#111">Wireless Internet Card</div>
<div class="t" style="left:240px;top:476px;font-size:9.6px;letter-spacing:-0.15px;line-height:12px;-webkit-text-stroke:0.08px currentColor;color:#111">Individual</div>
<div class="t" style="left:328px;top:476px;font-size:9.6px;letter-spacing:-0.15px;line-height:12px;-webkit-text-stroke:0.08px currentColor;color:#111">PLAN-1</div>
<div class="t" style="left:143px;top:802px;font-size:9.6px;letter-spacing:-0.15px;line-height:12px;-webkit-text-stroke:0.08px currentColor;color:#111">ADSL-4M</div>
<div class="t" style="left:328px;top:802px;font-size:9.6px;letter-spacing:-0.15px;line-height:12px;-webkit-text-stroke:0.08px currentColor;color:#111">PLAN-10</div>

<svg class="a" style="left:453px;top:817px" width="70" height="15">
 <defs><linearGradient id="gg" x1="0" y1="0" x2="0" y2="1"><stop offset="0" stop-color="#ffffff"/><stop offset="1" stop-color="#c4c4c4"/></linearGradient>
 <linearGradient id="bg2" x1="0" y1="0" x2="1" y2="0"><stop offset="0" stop-color="#9ccaf6"/><stop offset="0.5" stop-color="#4a94e4"/><stop offset="1" stop-color="#1a5ec0"/></linearGradient></defs>
 <rect x="1.5" y="0.6" width="11" height="1" fill="#8c8c8c"/>
 <path d="M7,2.5 L12.5,8 L9.5,8 L9.5,13 L4.5,13 L4.5,8 L1.5,8 Z" fill="url(#gg)" stroke="#a0a0a0" stroke-width="0.9" stroke-linejoin="round"/>
 <path d="M25,1.5 L30.5,7.5 L27.5,7.5 L27.5,13 L22.5,13 L22.5,7.5 L19.5,7.5 Z" fill="url(#gg)" stroke="#a8a8a8" stroke-width="0.9" stroke-linejoin="round"/>
 <path d="M39,1.5 L44,1.5 L44,7 L47.5,7 L41.5,13.2 L35.5,7 L39,7 Z" fill="url(#bg2)" stroke="#2a6cc4" stroke-width="0.9" stroke-linejoin="round"/>
 <rect x="54" y="1" width="13" height="1.3" fill="#2a6cc4"/>
 <rect x="54" y="12.8" width="13" height="1.3" fill="#2a6cc4"/>
 <path d="M60.5,3 L64,6 L62,6 L62,9.2 L64,9.2 L60.5,12.2 L57,9.2 L59,9.2 L59,6 L57,6 Z" fill="url(#bg2)" stroke="#1a5cb4" stroke-width="0.7"/>
</svg>
<div class="t" style="left:527px;top:818px;font-size:9.6px;color:#111;line-height:12px">Rows 1 - 25</div>
</body></html>
